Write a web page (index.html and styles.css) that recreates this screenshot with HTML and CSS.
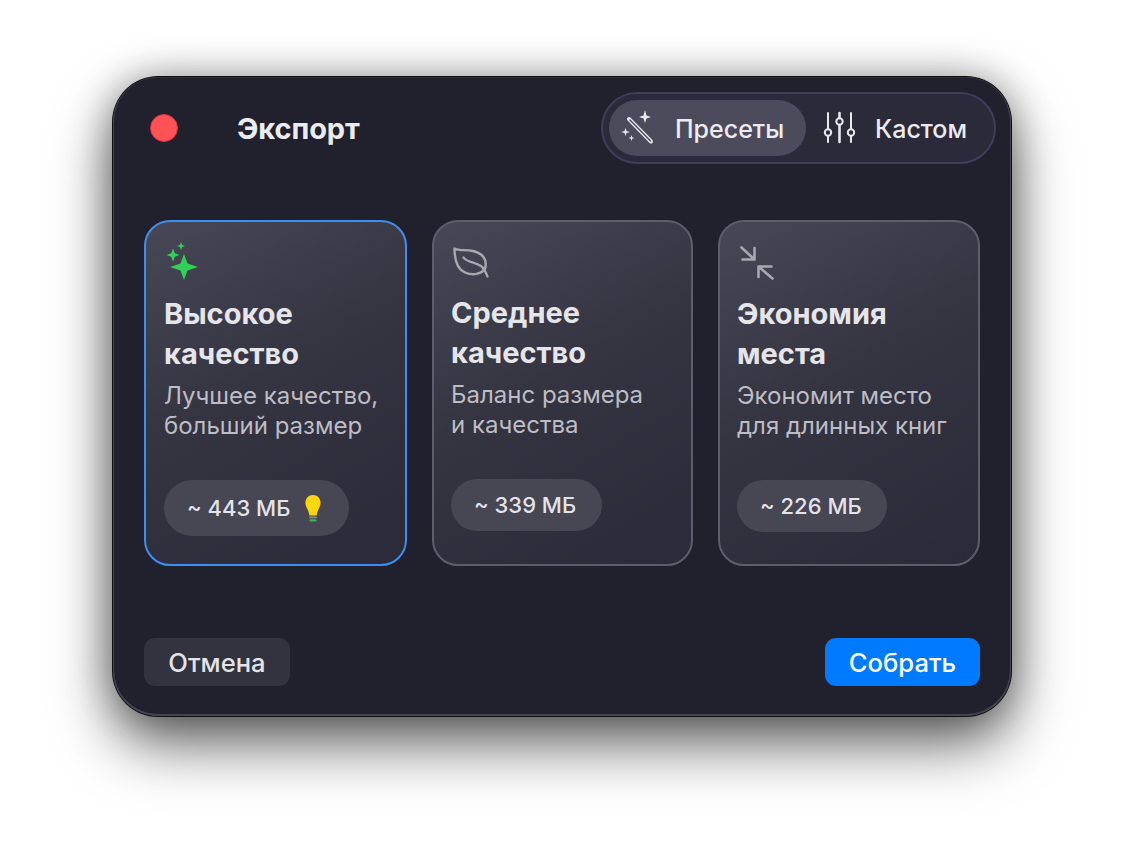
FILE: index.html
```html
<!DOCTYPE html>
<html>

<head>
  <title>Экспорт</title>
  <link rel="stylesheet" href="styles.css">
</head>

<body>
  <div class="window">
    <div class="title-bar">
      <span class="close-dot"></span>
      <h1 class="title">Экспорт</h1>
      <div class="segments">
        <div class="segment active">
          <svg class="segment-icon" width="36" height="36" viewBox="0 0 36 36" fill="none">
            <path d="M8 9 L30 31.500" stroke="#e8e8ec" stroke-width="4" stroke-linecap="round"/>
            <path d="M9 10 L29.500 31" stroke="#4c4b5c" stroke-width="1.400" stroke-linecap="round"/>
            <path d="M24 0 L25.500 5.500 L30 7 L25.500 8.500 L24 13 L22.500 8.500 L18 7 L22.500 5.500 Z" fill="#e8e8ec"/>
            <path d="M4.500 18 L5.500 21 L9 22 L5.500 23 L4.500 26 L3.500 23 L0 22 L3.500 21 Z" fill="#e8e8ec"/>
            <path d="M10.500 25 L11.200 27.300 L13.500 28 L11.200 28.700 L10.500 31 L9.800 28.700 L7.500 28 L9.800 27.300 Z" fill="#e8e8ec"/>
          </svg>
          <span class="segment-label">Пресеты</span>
        </div>
        <div class="segment">
          <svg class="segment-icon" width="34" height="34" viewBox="0 0 34 34" fill="none" stroke="#e8e8ec" stroke-width="2" stroke-linecap="round">
            <path d="M5 2 V18 M5 25 V31"/>
            <circle cx="5" cy="21.500" r="3.200"/>
            <path d="M16.500 2 V7 M16.500 14 V31" stroke-width="2.600"/>
            <circle cx="16.500" cy="10.500" r="3.200"/>
            <path d="M28 2 V18 M28 25 V31"/>
            <circle cx="28" cy="21.500" r="3.200"/>
          </svg>
          <span class="segment-label">Кастом</span>
        </div>
      </div>
    </div>

    <div class="cards">
      <div class="card selected">
        <svg class="card-icon" width="36" height="40" viewBox="0 0 36 40" fill="#30d158">
          <path d="M20 13 L23.500 22.500 L34 26 L23.500 29.500 L20 39 L16.500 29.500 L6 26 L16.500 22.500 Z"/>
          <path d="M9 7.500 L10.800 12.200 L15.500 14 L10.800 15.800 L9 20.500 L7.200 15.800 L2.500 14 L7.200 12.200 Z"/>
          <path d="M17 1 L18.100 3.900 L21 5 L18.100 6.100 L17 9 L15.900 6.100 L13 5 L15.900 3.900 Z"/>
        </svg>
        <h2 class="card-title">Высокое<br>качество</h2>
        <p class="card-text">Лучшее качество,<br>больший размер</p>
        <div class="size-pill with-bulb">
          <span>~ 443 МБ</span>
          <svg class="bulb" width="16" height="27" viewBox="0 0 18 29" preserveAspectRatio="none">
            <path d="M9 0 C14 0 17.500 3.700 17.500 8.500 C17.500 13 14 15.500 13 22 H5 C4 15.500 .5 13 .5 8.500 C.5 3.700 4 0 9 0 Z" fill="#ffd60a"/>
            <rect x="4.500" y="23" width="9" height="2" rx="1" fill="#8e9a3a"/>
            <rect x="5" y="26" width="8" height="2.500" rx="1.200" fill="#30b85a"/>
          </svg>
        </div>
      </div>

      <div class="card">
        <svg class="card-icon" width="40" height="40" viewBox="0 0 40 40" fill="none" stroke="#a7a7ae" stroke-width="2.400" stroke-linecap="round" stroke-linejoin="round">
          <path d="M3.500 7.500 C9 10.500 14 8 22 10 C30 12 37 17 34 28 C30 33 22 35 14 31.500 C6 28 3.500 20 3.500 7.500 Z"/>
          <path d="M12.500 16.500 C15 21 24 21 30 25 C33 27 35 32 36.500 35.500"/>
        </svg>
        <h2 class="card-title">Среднее<br>качество</h2>
        <p class="card-text">Баланс размера<br>и качества</p>
        <div class="size-pill"><span>~ 339 МБ</span></div>
      </div>

      <div class="card compact">
        <svg class="card-icon" width="40" height="40" viewBox="0 0 40 40" fill="none" stroke="#a7a7ae" stroke-width="2.600" stroke-linecap="round" stroke-linejoin="round">
          <path d="M4.500 6.500 L17.500 18.500 M17.500 7 V18.500 H5.500"/>
          <path d="M35.500 37.500 L21.500 25.500 M21.500 36 V25.500 H34.500"/>
        </svg>
        <h2 class="card-title">Экономия<br>места</h2>
        <p class="card-text">Экономит место<br>для длинных книг</p>
        <div class="size-pill"><span>~ 226 МБ</span></div>
      </div>
    </div>

    <div class="footer">
      <button class="btn btn-cancel">Отмена</button>
      <button class="btn btn-primary">Собрать</button>
    </div>
  </div>
</body>

</html>
```

FILE: styles.css
```css
html, body {
  margin: 0;
  padding: 0;
  width: 100%;
  height: 100%;
  background: #fff;
  font-family: Inter, "Noto Sans", sans-serif;
  overflow: hidden;
}
body {
  padding: 77px 0 0 113px;
  box-sizing: border-box;
}
h1, h2, p {
  margin: 0;
}
.window {
  width: 898px;
  height: 639px;
  box-sizing: border-box;
  padding: 15px 31px 30px;
  display: flex;
  flex-direction: column;
  background: #21212d;
  border-radius: 45px;
  box-shadow:
    0 0 0 1px #111,
    inset 0 -1px 0 1px #44444e,
    inset 0 0 0 1px #2e2e38,
    0 28px 60px rgba(0, 0, 0, .6),
    0 0 38px rgba(0, 0, 0, .32);
}

/* title bar */
.title-bar {
  display: flex;
  align-items: center;
  height: 72px;
}
.close-dot {
  width: 26px;
  height: 26px;
  margin-left: 6px;
  border-radius: 50%;
  background: #ff5257;
  border: 1px solid #e0303a;
}
.title {
  margin-left: 59px;
  font-size: 29px;
  font-weight: 700;
  letter-spacing: -.1px;
  color: #ececf0;
}
.segments {
  margin-left: auto;
  margin-right: -16px;
  height: 72px;
  width: 395px;
  box-sizing: border-box;
  padding: 6px;
  display: flex;
  align-items: center;
  background: #2a2a39;
  border: 2px solid #3e3d5f;
  border-radius: 36px;
}
.segment {
  height: 56px;
  display: flex;
  align-items: center;
  font-size: 25px;
  font-weight: 500;
  color: #ececf0;
  border-radius: 28px;
}
.segment-label {
  padding-top: 2px;
}
.segment.active {
  width: 197px;
  padding-left: 12px;
  box-sizing: border-box;
  gap: 18px;
  background: #4c4b5c;
}
.segment:not(.active) {
  padding-left: 17px;
  gap: 18px;
}

/* preset cards */
.cards {
  margin-top: 56px;
  display: grid;
  grid-template-columns: 263px 261px 262px;
  gap: 25px;
}
.card {
  height: 346px;
  box-sizing: border-box;
  padding: 19px 17px 0;
  display: flex;
  flex-direction: column;
  align-items: flex-start;
  background: linear-gradient(150deg, #484756 0%, #353441 45%, #2a2a38 100%);
  border: 2px solid #5e5d6c;
  border-radius: 26px;
}
.card.selected {
  padding-left: 18px;
  border-color: #3d8fef;
}
.card-icon {
  display: block;
  margin-bottom: 12px;
}
.card.selected .card-icon,
.card.compact .card-icon {
  margin-bottom: 13px;
}
.card-title {
  font-size: 29px;
  line-height: 40px;
  font-weight: 700;
  color: #e6e6ea;
}
.card-text {
  margin-top: 7px;
  font-size: 24px;
  line-height: 30px;
  color: #bdbdc4;
}
.size-pill {
  margin-top: 39px;
  height: 52px;
  padding: 0 26px 0 23px;
  display: flex;
  align-items: center;
  gap: 15px;
  font-size: 22px;
  font-weight: 500;
  color: #e4e4e8;
  background: #474653;
  border-radius: 26px;
}
.card.compact .size-pill {
  padding-right: 25px;
}
.size-pill.with-bulb {
  height: 56px;
  padding-right: 28px;
  border-radius: 28px;
}

/* footer */
.footer {
  margin-top: auto;
  display: flex;
  justify-content: space-between;
}
.btn {
  height: 48px;
  padding: 0;
  border: 0;
  border-radius: 11px;
  font-family: inherit;
  font-size: 25.6px;
  font-weight: 500;
  cursor: pointer;
}
.btn-cancel {
  width: 146px;
  background: #333340;
  color: #e4e4e8;
}
.btn-primary {
  width: 155px;
  background: #007aff;
  color: #fff;
}
```
